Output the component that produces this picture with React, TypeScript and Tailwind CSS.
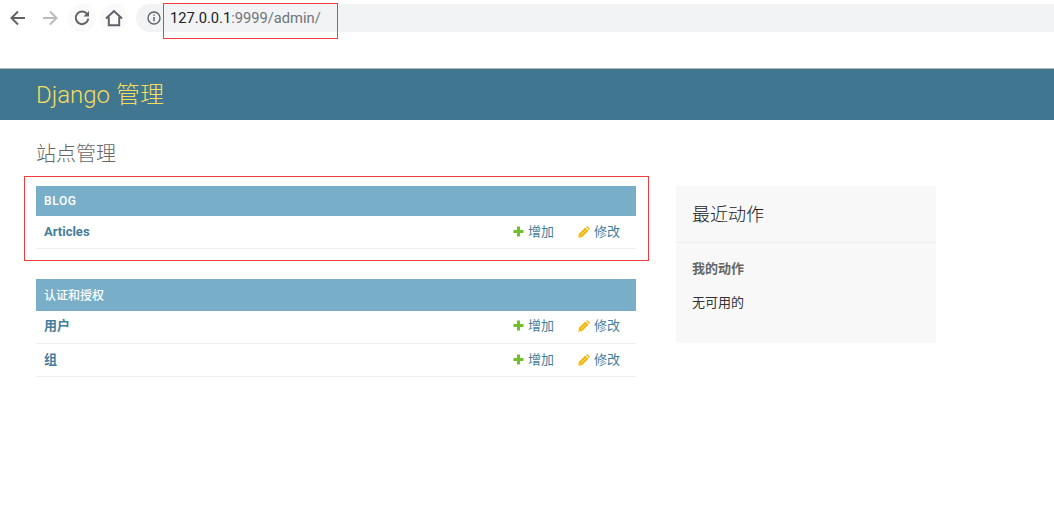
const FONT = "font-['Roboto','Noto_Sans_CJK_SC',sans-serif]";

function PlusIcon() {
  return (
    <svg width="11" height="11" viewBox="0 0 11 11" className="shrink-0">
      <path d="M4 0.5h3v3.5h3.5v3H7v3.5H4V7H0.5V4H4z" fill="#70bf2b" />
    </svg>
  );
}

function PencilIcon() {
  return (
    <svg width="12" height="12" viewBox="0 0 12 12" className="shrink-0">
      <path d="M0.3 11.7l0.7-3.9 6.3-6.3 3.2 3.2-6.3 6.3z" fill="#efb80b" />
      <path d="M8.1 0.8l0.5-0.4c0.4-0.3 0.8-0.3 1.1 0l1.9 1.9c0.3 0.3 0.3 0.8 0 1.1l-0.4 0.5z" fill="#efb80b" />
      <path d="M3 8.9l4.6-4.6" stroke="#fbe3a0" strokeWidth="0.8" fill="none" />
      <path d="M0.3 11.7l0.4-2 1.6 1.6z" fill="#f7d774" />
    </svg>
  );
}

function ModelRow({ name, first = false }: { name: string; first?: boolean }) {
  return (
    <div
      className={`flex h-[33px] items-center border-b border-[#eeeeee] pl-2 pr-4 text-[13px] ${
        first ? "pb-[3px]" : "pb-px"
      }`}
    >
      <span className="flex-1 font-bold text-[#447e9b]">{name}</span>
      <span className="flex items-center gap-[4px] text-[#447e9b]">
        <PlusIcon />
        增加
      </span>
      <span className="ml-[24px] flex items-center gap-[4px] text-[#447e9b]">
        <PencilIcon />
        修改
      </span>
    </div>
  );
}

function ToolbarButton({ children }: { children: React.ReactNode }) {
  return <div className="flex h-7 w-7 items-center justify-center rounded-full">{children}</div>;
}

export default function App() {
  return (
    <div className={`relative h-[526px] w-[1054px] overflow-hidden bg-white ${FONT}`}>
      {/* Browser toolbar */}
      <div className="flex h-[68px] items-start gap-[4px] pl-[4px] pt-[4px]">
        <ToolbarButton>
          <svg width="18" height="18" viewBox="0 0 18 18" fill="none" stroke="#5f6368" strokeWidth="2">
            <path d="M16 9H3M9 2.5L2.5 9 9 15.5" />
          </svg>
        </ToolbarButton>
        <ToolbarButton>
          <svg width="18" height="18" viewBox="0 0 18 18" fill="none" stroke="#bababa" strokeWidth="2">
            <path d="M2 9h13M9 2.5L15.5 9 9 15.5" />
          </svg>
        </ToolbarButton>
        <div className="flex h-7 w-7 items-center justify-center rounded-full bg-[#fafafa]">
          <svg width="18" height="18" viewBox="0 0 18 18" fill="none">
            <path d="M14.2 5.2A6.3 6.3 0 1 0 15.3 9.5" stroke="#5f6368" strokeWidth="2" />
            <path d="M10.5 7.5H16V2z" fill="#5f6368" />
          </svg>
        </div>
        <div className="flex h-7 w-7 items-center justify-center rounded-full bg-[#fafafa]">
          <svg width="18" height="18" viewBox="0 0 18 18" fill="none" stroke="#5f6368" strokeWidth="2">
            <path d="M1 9.5L9 2l8 7.5M3.8 8v8.2h10.4V8" />
          </svg>
        </div>
        <div className="ml-[4px] flex h-7 flex-1 items-center rounded-l-full bg-[#f1f3f4] pl-[11px]">
          <svg width="14" height="14" viewBox="0 0 14 14" fill="none" stroke="#5f6368" className="shrink-0">
            <circle cx="7" cy="7" r="6" strokeWidth="1.4" />
            <path d="M7 6v4.2M7 3.4v1.4" strokeWidth="1.5" />
          </svg>
          <span className="ml-[9px] text-[14.7px] text-[#202124]">
            127.0.0.1<span className="text-[#70757a]">:9999/admin/</span>
          </span>
        </div>
      </div>

      {/* Django header */}
      <div className="flex h-[52px] items-center border-t border-[#b3b3b3] bg-[#417690] pl-9 pt-px text-2xl font-light text-[#f5dd5d]">
        Django 管理
      </div>

      <div className="px-9 pt-[21px]">
        <h1 className="text-[20px] leading-[26px] font-light text-[#666666]">站点管理</h1>

        <div className="mt-[19px] flex items-start gap-10">
          <div className="flex w-[600px] flex-col gap-[30px]">
            <div>
              <div className="flex h-[30px] items-center bg-[#79aec8] pl-2 text-xs font-medium tracking-[0.6px] text-white">
                BLOG
              </div>
              <ModelRow name="Articles" />
            </div>
            <div>
              <div className="flex h-8 items-center bg-[#79aec8] pl-2 pt-[2px] text-xs font-medium text-white">
                认证和授权
              </div>
              <ModelRow name="用户" first />
              <ModelRow name="组" />
            </div>
          </div>

          <div className="h-[157px] w-[260px] bg-[#f8f8f8]">
            <div className="flex h-[57px] items-center border-b border-[#eeeeee] pl-4 text-[18px] font-light text-[#222222]">
              最近动作
            </div>
            <div className="pl-4 pt-[16px] text-[13px] leading-[19px]">
              <div className="font-bold text-[#666666]">我的动作</div>
              <div className="mt-[15px] text-[#333333]">无可用的</div>
            </div>
          </div>
        </div>
      </div>

      {/* Red annotation boxes drawn over the screenshot */}
      <div className="absolute left-[163px] top-[3px] h-[36px] w-[175px] border border-[#f33c3c]" />
      <div className="absolute left-[24px] top-[176px] h-[85px] w-[625px] border border-[#f33c3c]" />
    </div>
  );
}
